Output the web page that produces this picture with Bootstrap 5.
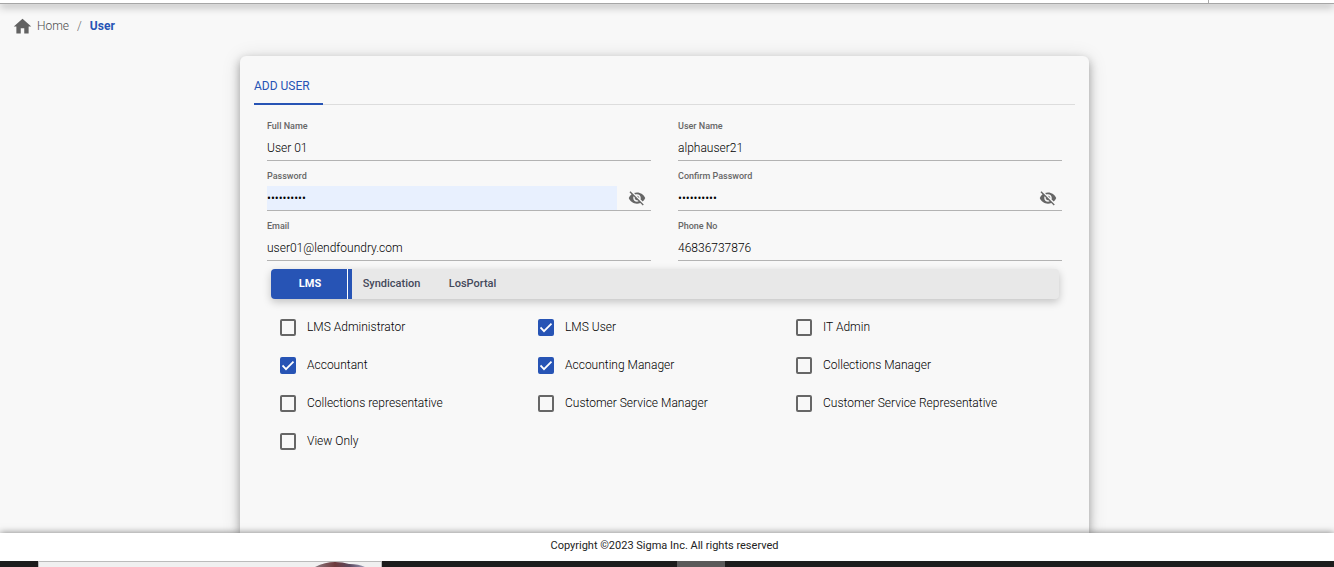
<!DOCTYPE html>
<html lang="en">
<head>
<meta charset="utf-8">
<meta name="viewport" content="width=device-width, initial-scale=1">
<title>Add User</title>
<link href="https://cdn.jsdelivr.net/npm/bootstrap@5.3.0/dist/css/bootstrap.min.css" rel="stylesheet">
<style>
  :root { --brand: #2754b5; --surface: #f8f8f8; }
  body { font-family: Roboto, "Liberation Sans", sans-serif; font-size: 12px; line-height: 16px; color: #222; background: var(--surface); }
  .topbar { height: 3px; z-index: 2; box-shadow: 0 1px 0 #a6a6a6, 0 3px 8px rgba(0,0,0,.5); }
  .topbar-divider { width: 1px; margin-right: 125px; background: #aaa; }
  .crumbs { padding: 15px 12px 0; height: 53px; }
  .crumbs .breadcrumb { --bs-breadcrumb-item-padding-x: 8px; --bs-breadcrumb-font-size: 12px; --bs-breadcrumb-divider-color: #666; }
  .crumbs a { color: #4c4c4c; }
  .crumbs .breadcrumb-item, .crumbs .breadcrumb-item::before { font-weight: 300; }
  .crumbs .breadcrumb-item.active { color: var(--brand); font-weight: 700; }
  .home-icon { width: 21px; height: 21px; margin: -2px 4px 0 0; }
  .stage { padding-right: 5px; }
  .user-card { width: 100%; max-width: 849px; padding: 14px 14px 0; background: var(--surface); border-radius: 6px 6px 0 0; box-shadow: 0 4px 10px rgba(0,0,0,.32), 0 2px 20px rgba(0,0,0,.12); }
  .page-tabs { border-bottom: 1px solid #ddd; height: 35px; }
  .page-tabs .nav-link { height: 35px; padding: 8px 13px 0 0; border-bottom: 2px solid var(--brand); color: var(--brand); font-weight: 400; line-height: 16px; }
  .fields { display: grid; grid-template-columns: 1fr 1fr; gap: 8px 27px; padding: 14px 13px 8px; }
  .field-label { display: block; margin-bottom: 3px; font-size: 9px; line-height: 14px; font-weight: 500; color: #666; }
  .field-line { border-bottom: 1px solid #b3b3b3; }
  .field-line input { height: 24px; min-width: 0; padding: 0; border: 0; background: transparent; font-size: 12px; font-weight: 300; color: #000; outline: 0; }
  .field-line input.autofilled { background: #e8f0fe; }
  .eye { width: 34px; padding: 0 0 0 6px; border: 0; background: transparent; color: #666; line-height: 0; }
  .portal-tabs { height: 30px; margin: 0 16px 0 17px; background: #e8e8e8; border-radius: 4px; overflow: hidden; box-shadow: 0 3px 8px rgba(0,0,0,.22); }
  .portal-tabs button { width: 81px; border: 0; padding: 0 2px 1px 0; background: transparent; font-size: 11px; font-weight: 500; color: #44495a; }
  .portal-tabs button.current { width: 77px; padding: 0 0 1px 2px; background: var(--brand); color: #fff; font-weight: 700; border-right: 1px solid #fff; }
  .portal-tabs .edge { width: 4px; background: var(--brand); }
  .roles { display: grid; grid-template-columns: repeat(3, 1fr); row-gap: 1px; padding: 10px 21px 72px 26px; font-weight: 300; color: #000; }
  .role { height: 37px; }
  .role .form-check-input { width: 16px; height: 17px; margin: 0; border: 2px solid #666; border-radius: 2px; background-color: transparent; box-shadow: none; }
  .role .form-check-input:checked { border-color: var(--brand); background-color: var(--brand); background-size: 16px 16px;
    background-image: url("data:image/svg+xml,%3Csvg xmlns='http://www.w3.org/2000/svg' viewBox='0 0 16 16'%3E%3Cpath d='M2.5 7.8L6 11.3 13.5 4' fill='none' stroke='%23fff' stroke-width='1.8'/%3E%3C/svg%3E"); }
  .role label { padding: 0 0 2px 11px; }
  .page-foot { z-index: 2; padding: 5px 5px 7px 0; font-size: 11px; box-shadow: 0 0 7px rgba(0,0,0,.5); }
  .taskbar { z-index: 3; height: 6px; background: #1c1c1c; overflow: hidden; }
  .task-search { width: 344px; margin-left: 38px; background: #f0f0f0; border: 1px solid #bbb; border-bottom: 0; }
  .task-active { width: 48px; margin-left: 295px; background: #5a5a5a; }
</style>
</head>
<body class="d-flex flex-column min-vh-100">
<header class="topbar bg-white d-flex justify-content-end position-relative"><span class="topbar-divider"></span></header>

<nav class="crumbs d-flex align-items-start" aria-label="breadcrumb">
  <svg class="home-icon" viewBox="0 0 24 24" fill="#626262" aria-hidden="true"><path d="M10 20v-6h4v6h5v-8h3L12 3 2 12h3v8z"/></svg>
  <ol class="breadcrumb mb-0">
    <li class="breadcrumb-item"><a href="#" class="text-decoration-none">Home</a></li>
    <li class="breadcrumb-item active" aria-current="page">User</li>
  </ol>
</nav>

<main class="stage flex-grow-1 d-flex flex-column">
  <form class="user-card mx-auto flex-grow-1">
    <ul class="nav page-tabs">
      <li class="nav-item"><a class="nav-link" href="#" aria-current="page">ADD USER</a></li>
    </ul>

    <div class="fields">
      <div>
        <label class="field-label" for="fullName">Full Name</label>
        <div class="field-line d-flex"><input class="flex-grow-1" id="fullName" type="text" value="User 01"></div>
      </div>
      <div>
        <label class="field-label" for="userName">User Name</label>
        <div class="field-line d-flex"><input class="flex-grow-1" id="userName" type="text" value="alphauser21"></div>
      </div>
      <div>
        <label class="field-label" for="pass">Password</label>
        <div class="field-line d-flex"><input class="flex-grow-1 autofilled" id="pass" type="password" value="password21">
          <button class="eye" type="button" aria-label="Show password"><svg width="18" height="18" viewBox="0 0 24 24" fill="currentColor"><path d="M12 7c2.76 0 5 2.24 5 5 0 .65-.13 1.26-.36 1.83l2.92 2.92c1.51-1.26 2.7-2.89 3.43-4.75-1.73-4.39-6-7.5-11-7.5-1.4 0-2.74.25-3.98.7l2.16 2.16C10.74 7.13 11.35 7 12 7zM2 4.27l2.28 2.28.46.46C3.08 8.3 1.78 10.02 1 12c1.73 4.39 6 7.5 11 7.5 1.55 0 3.03-.3 4.38-.84l.42.42L19.73 22 21 20.73 3.27 3 2 4.27zM7.53 9.8l1.55 1.55c-.05.21-.08.43-.08.65 0 1.66 1.34 3 3 3 .22 0 .44-.03.65-.08l1.55 1.55c-.67.33-1.41.53-2.2.53-2.76 0-5-2.24-5-5 0-.79.2-1.53.53-2.2zm4.31-.78l3.15 3.15.02-.16c0-1.66-1.34-3-3-3l-.17.01z"/></svg></button></div>
      </div>
      <div>
        <label class="field-label" for="pass2">Confirm Password</label>
        <div class="field-line d-flex"><input class="flex-grow-1" id="pass2" type="password" value="password21">
          <button class="eye" type="button" aria-label="Show confirmed password"><svg width="18" height="18" viewBox="0 0 24 24" fill="currentColor"><path d="M12 7c2.76 0 5 2.24 5 5 0 .65-.13 1.26-.36 1.83l2.92 2.92c1.51-1.26 2.7-2.89 3.43-4.75-1.73-4.39-6-7.5-11-7.5-1.4 0-2.74.25-3.98.7l2.16 2.16C10.74 7.13 11.35 7 12 7zM2 4.27l2.28 2.28.46.46C3.08 8.3 1.78 10.02 1 12c1.73 4.39 6 7.5 11 7.5 1.55 0 3.03-.3 4.38-.84l.42.42L19.73 22 21 20.73 3.27 3 2 4.27zM7.53 9.8l1.55 1.55c-.05.21-.08.43-.08.65 0 1.66 1.34 3 3 3 .22 0 .44-.03.65-.08l1.55 1.55c-.67.33-1.41.53-2.2.53-2.76 0-5-2.24-5-5 0-.79.2-1.53.53-2.2zm4.31-.78l3.15 3.15.02-.16c0-1.66-1.34-3-3-3l-.17.01z"/></svg></button></div>
      </div>
      <div>
        <label class="field-label" for="email">Email</label>
        <div class="field-line d-flex"><input class="flex-grow-1" id="email" type="email" value="user01@lendfoundry.com"></div>
      </div>
      <div>
        <label class="field-label" for="phone">Phone No</label>
        <div class="field-line d-flex"><input class="flex-grow-1" id="phone" type="tel" value="46836737876"></div>
      </div>
    </div>

    <div class="portal-tabs d-flex">
      <button type="button" class="current">LMS</button><span class="edge"></span>
      <button type="button">Syndication</button>
      <button type="button">LosPortal</button>
    </div>

    <div class="roles">
      <div class="role d-flex align-items-center"><input class="form-check-input" type="checkbox" id="r1"><label for="r1">LMS Administrator</label></div>
      <div class="role d-flex align-items-center"><input class="form-check-input" type="checkbox" id="r2" checked><label for="r2">LMS User</label></div>
      <div class="role d-flex align-items-center"><input class="form-check-input" type="checkbox" id="r3"><label for="r3">IT Admin</label></div>
      <div class="role d-flex align-items-center"><input class="form-check-input" type="checkbox" id="r4" checked><label for="r4">Accountant</label></div>
      <div class="role d-flex align-items-center"><input class="form-check-input" type="checkbox" id="r5" checked><label for="r5">Accounting Manager</label></div>
      <div class="role d-flex align-items-center"><input class="form-check-input" type="checkbox" id="r6"><label for="r6">Collections Manager</label></div>
      <div class="role d-flex align-items-center"><input class="form-check-input" type="checkbox" id="r7"><label for="r7">Collections representative</label></div>
      <div class="role d-flex align-items-center"><input class="form-check-input" type="checkbox" id="r8"><label for="r8">Customer Service Manager</label></div>
      <div class="role d-flex align-items-center"><input class="form-check-input" type="checkbox" id="r9"><label for="r9">Customer Service Representative</label></div>
      <div class="role d-flex align-items-center"><input class="form-check-input" type="checkbox" id="r10"><label for="r10">View Only</label></div>
    </div>
  </form>
</main>

<footer class="page-foot bg-white text-center position-relative">Copyright ©2023 Sigma Inc. All rights reserved</footer>
<div class="taskbar d-flex position-relative" aria-hidden="true">
  <div class="task-search d-flex justify-content-end">
    <svg class="me-3" width="50" height="5" viewBox="0 0 50 5"><defs><linearGradient id="g"><stop offset="0" stop-color="#8a7a80"/><stop offset=".4" stop-color="#6e3a3c"/><stop offset=".7" stop-color="#5c4a60"/><stop offset="1" stop-color="#9a9cb8"/></linearGradient></defs><path d="M0 5Q10 0 20 0Q28 0 34 2Q44 2 50 5Z" fill="url(#g)"/></svg>
  </div>
  <div class="task-active"></div>
</div>
<script src="https://cdn.jsdelivr.net/npm/bootstrap@5.3.0/dist/js/bootstrap.bundle.min.js"></script>
</body>
</html>
